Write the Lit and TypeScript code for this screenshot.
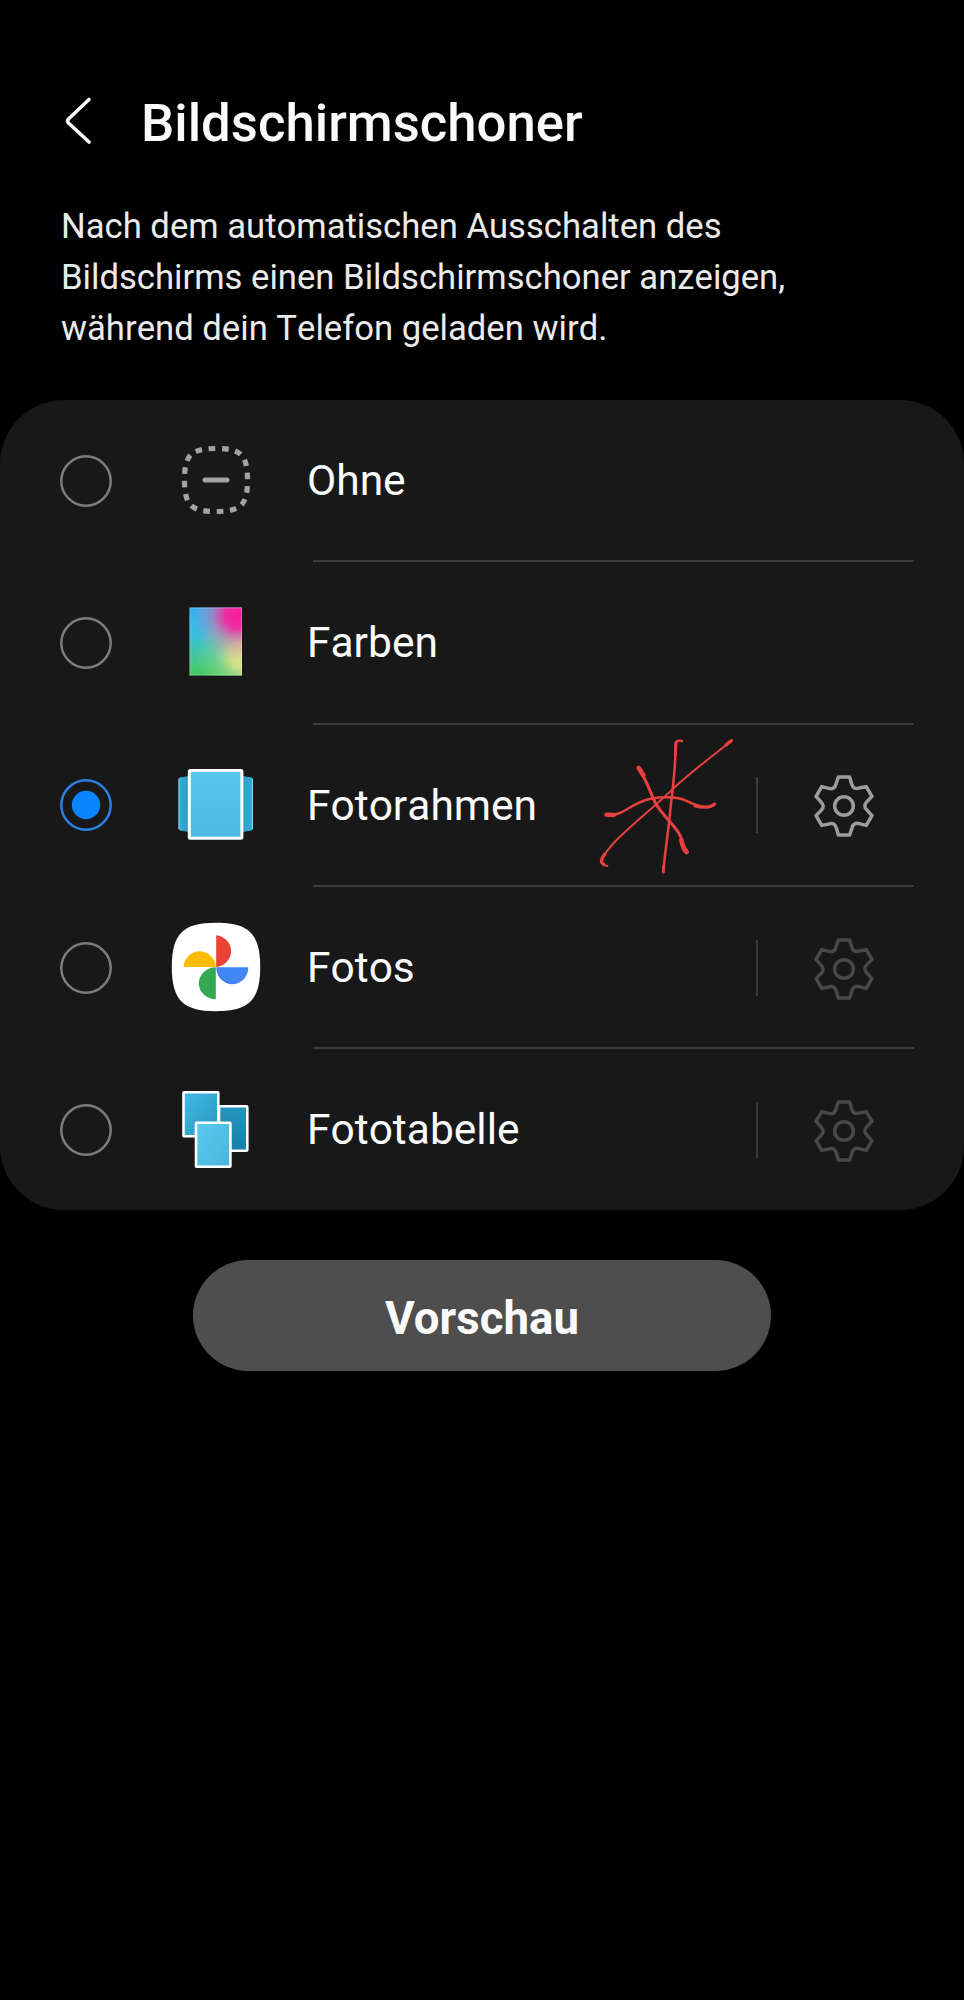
import { LitElement, html, svg, css, nothing } from "lit";
import { customElement, property, state } from "lit/decorators.js";

type Saver = { id: string; label: string; settings?: boolean };

const SAVERS: Saver[] = [
  { id: "none", label: "Ohne" },
  { id: "colors", label: "Farben" },
  { id: "frame", label: "Fotorahmen", settings: true },
  { id: "photos", label: "Fotos", settings: true },
  { id: "table", label: "Fototabelle", settings: true },
];

// One tooth plus the valley after it, repeated six times around the hub.
const TOOTH: number[][] = [[-17, -87], [17, -87], [23, -66], [28, -48.5], [45.1, -53.8]];
const gearPath = (() => {
  let d = "";
  for (let i = 0; i < 6; i++) {
    const a = (i * Math.PI) / 3;
    const p = TOOTH.map(([x, y]) =>
      `${(x * Math.cos(a) - y * Math.sin(a)).toFixed(1)} ${(x * Math.sin(a) + y * Math.cos(a)).toFixed(1)}`);
    d += `${i ? "L" : "M"}${p[0]}L${p[1]}L${p[2]}Q${p[3]} ${p[4]}`;
  }
  return d + "Z";
})();

@customElement("saver-icon")
class SaverIcon extends LitElement {
  @property() name = "none";
  static styles = css`
    :host { display: block; width: 90px; height: 90px; }
    svg { display: block; }
  `;
  private art() {
    switch (this.name) {
      case "none":
        return svg`
          <path d="M45 13.5C70 13.5 76.5 20 76.5 45S70 76.5 45 76.5 13.5 70 13.5 45 20 13.5 45 13.5Z"
            fill="none" stroke="#a3a3a3" stroke-width="5.2" pathLength="160" stroke-dasharray="5 5" stroke-dashoffset="-4.5"/>
          <path d="M34 45H56" stroke="#a3a3a3" stroke-width="5" stroke-linecap="round"/>`;
      case "colors":
        return svg`
          <defs>
            <linearGradient id="base" x1="0" y1="0" x2="0" y2="1">
              <stop offset="0" stop-color="#2fb0f2"/><stop offset=".4" stop-color="#38bfe0"/>
              <stop offset=".85" stop-color="#45c87c"/><stop offset="1" stop-color="#42c862"/>
            </linearGradient>
            <radialGradient id="yellow" gradientUnits="userSpaceOnUse" cx="73" cy="58" r="48">
              <stop offset="0" stop-color="#efdc8c"/><stop offset=".3" stop-color="#e4e288" stop-opacity=".85"/>
              <stop offset=".6" stop-color="#b0dc98" stop-opacity=".4"/>
              <stop offset="1" stop-color="#9adb7c" stop-opacity="0"/>
            </radialGradient>
            <radialGradient id="pink" gradientUnits="userSpaceOnUse" cx="67" cy="18" r="46">
              <stop offset="0" stop-color="#fb1c96"/><stop offset=".3" stop-color="#f22aa0" stop-opacity=".95"/>
              <stop offset=".6" stop-color="#d870b0" stop-opacity=".5"/>
              <stop offset="1" stop-color="#b090c8" stop-opacity="0"/>
            </radialGradient>
          </defs>
          <rect x="18.5" y="10.5" width="52.5" height="68" fill="url(#base)"/>
          <rect x="18.5" y="10.5" width="52.5" height="68" fill="url(#yellow)"/>
          <rect x="18.5" y="10.5" width="52.5" height="68" fill="url(#pink)"/>
          <rect x="19" y="11" width="51.5" height="67" fill="none" stroke="#fff" stroke-opacity=".25"/>`;
      case "frame":
        return svg`
          <defs>
            <linearGradient id="f" x1="0" y1="0" x2="0" y2="1">
              <stop offset="0" stop-color="#58c8ef"/><stop offset="1" stop-color="#4db8e0"/>
            </linearGradient>
            <linearGradient id="s" x1="0" y1="0" x2="1" y2="0">
              <stop offset="0" stop-color="#35b0d8"/><stop offset=".13" stop-color="#2a9cc4"/>
              <stop offset=".87" stop-color="#2ba0c8"/><stop offset="1" stop-color="#35b0d8"/>
            </linearGradient>
          </defs>
          <path d="M7.5 19Q7.5 18 9 17.6L18 16H72L80.5 17.6Q82 18 82 19V69Q82 70 80.5 70.4L72 72H18L9 70.4Q7.5 70 7.5 69Z" fill="url(#s)"/>
          <path d="M8 19V69M81.5 19V69" stroke="#7cd3ee" stroke-width="1"/>
          <rect x="18.3" y="10.5" width="52.6" height="67.8" rx="1" fill="url(#f)" stroke="#fff" stroke-width="3"/>`;
      case "photos":
        return svg`
          <path d="M45 .8C78 .8 89.2 12 89.2 45S78 89.2 45 89.2.8 78 .8 45 12 .8 45 .8Z" fill="#fff"/>
          <path d="M45.2 13.2A16.8 16 0 0 1 45.2 45Z" fill="#ea4335"/>
          <path d="M77.3 45.3A16 17 0 0 1 45.2 45.3Z" fill="#4285f4"/>
          <path d="M44.8 77.3A17 16 0 0 1 44.8 45.3Z" fill="#34a853"/>
          <path d="M12.5 45A16.2 17 0 0 1 44.8 45Z" fill="#fbbc04"/>`;
      default:
        return svg`
          <defs>
            <linearGradient id="a" x1="0" y1="0" x2="1" y2="1">
              <stop offset="0" stop-color="#41bbe8"/><stop offset="1" stop-color="#2795bd"/>
            </linearGradient>
            <linearGradient id="b" x1="0" y1="0" x2="0" y2="1">
              <stop offset="0" stop-color="#2695be"/><stop offset="1" stop-color="#1680a8"/>
            </linearGradient>
            <linearGradient id="c" x1="0" y1="0" x2="1" y2="1">
              <stop offset="0" stop-color="#5acbf0"/><stop offset="1" stop-color="#4ab4db"/>
            </linearGradient>
          </defs>
          <g stroke="#fff" stroke-width="2.6">
            <rect x="12.5" y="8.3" width="34.8" height="44" rx=".5" fill="url(#a)"/>
            <rect x="48" y="22.3" width="28.3" height="44.5" rx="1" fill="url(#b)"/>
            <rect x="25" y="38.7" width="34.4" height="44" rx=".5" fill="url(#c)"/>
          </g>`;
    }
  }
  render() {
    return html`<svg width="90" height="90" viewBox="0 0 90 90">${this.art()}</svg>`;
  }
}

@customElement("app-root")
class AppRoot extends LitElement {
  @state() private selected = "frame";

  static styles = css`
    :host {
      display: block; min-height: 2000px; background: #000; color: #fafafa;
      font-family: Roboto, "Liberation Sans", sans-serif;
    }
    .header { display: flex; align-items: center; padding: 90px 0 0 62px; height: 64px; }
    .back { display: block; margin-right: 43px; }
    .title { margin: 0; padding-top: 1px; font-size: 52.7px; line-height: 64px; font-weight: 500; white-space: nowrap; }
    .intro { margin: 47px 0 0 61px; height: 199px; font-size: 34.65px; line-height: 51px; color: #ebebeb; white-space: nowrap; font-kerning: none; }
    .panel { position: relative; height: 809.5px; border-radius: 64px; background: #181818; display: flex; flex-direction: column; }
    .row { flex: 1; display: grid; grid-template-columns: 52px 90px 1fr auto; align-items: center; padding: 1px 91px 0 59.5px; }
    .radio { display: block; color: #7c7c7c; }
    .radio.on { color: #2c7fe0; }
    .icon { margin: -1px 0 0 59.5px; }
    .label { margin-left: 105.5px; font-size: 42.5px; line-height: 50px; padding-top: 1px; white-space: nowrap; font-kerning: none; }
    .settings { display: flex; align-items: center; gap: 55.5px; }
    .bar { width: 2px; height: 56px; background: #3a3a3a; }
    .gear { color: #9c9c9c; display: block; margin: 2px -0.5px 0 0; }
    .gear.off { color: #484848; }
    .line { height: 2px; margin: 0 50px 0 313px; background: #3a3a3a; }
    .scribble { position: absolute; left: 580px; top: 320px; }
    .preview { display: flex; align-items: center; justify-content: center; width: 578px; height: 111px; margin: 50.5px auto 0; border-radius: 56px; background: #4e4e4e; font-size: 45.6px; font-weight: 700; padding-top: 5px; box-sizing: border-box; }
  `;

  private row(s: Saver, i: number) {
    const on = s.id === this.selected;
    return html`
      ${i ? html`<div class="line"></div>` : nothing}
      <div class="row" @click=${() => (this.selected = s.id)}>
        <svg class="radio ${on ? "on" : ""}" width="52" height="52" viewBox="0 0 52 52">
          <circle cx="26" cy="26" r="24.7" fill="none" stroke="currentColor" stroke-width="2.5" />
          ${on ? svg`<circle cx="26" cy="26" r="14.2" fill="#0a84ff" />` : nothing}
        </svg>
        <saver-icon class="icon" name=${s.id}></saver-icon>
        <div class="label">${s.label}</div>
        ${s.settings ? html`
          <div class="settings">
            <div class="bar"></div>
            <svg class="gear ${on ? "" : "off"}" width="60" height="64" viewBox="-90 -96 180 192"
              fill="none" stroke="currentColor" stroke-width="10.5" stroke-linejoin="round">
              <path d=${gearPath} /><circle r="28" />
            </svg>
          </div>` : nothing}
      </div>`;
  }

  render() {
    return html`
      <div class="header">
        <svg class="back" width="36" height="64" viewBox="0 0 36 64" fill="none" stroke="#fafafa"
          stroke-width="3.6" stroke-linecap="round" stroke-linejoin="round">
          <path d="M27 9.5L6.5 29Q4.7 31 6.5 33L27 52" />
        </svg>
        <h1 class="title">Bildschirmschoner</h1>
      </div>
      <p class="intro">Nach dem automatischen Ausschalten des<br />Bildschirms einen Bildschirmschoner anzeigen,<br />während dein Telefon geladen wird.</p>
      <div class="panel">
        ${SAVERS.map((s, i) => this.row(s, i))}
        <svg class="scribble" width="170" height="170" viewBox="0 0 510 510" fill="none" stroke="#e8403f"
          stroke-width="7.5" stroke-linecap="round" stroke-linejoin="round">
          <path d="M306 63Q287 59 287 72C288 130 278 210 272 260C266 330 254 400 250 456" />
          <path d="M288 68L286 105M251 440L250 456" stroke-width="9" />
          <path d="M454 62C390 115 320 165 270 215C215 268 130 335 96 375C78 397 66 410 64 424Q66 434 82 438" stroke-width="6" />
          <path d="M454 62L438 75M74 403Q62 418 65 427L72 434" stroke-width="10" />
          <path d="M79 284C130 292 150 248 212 236C250 230 290 230 316 241C342 254 385 270 404 252" />
          <path d="M79 284L102 285" stroke-width="13" />
          <path d="M345 258Q385 268 404 252" stroke-width="9" />
          <path d="M176 144C200 180 212 222 228 252C250 290 290 320 302 350C309 372 309 390 321 397" stroke-width="9" />
          <path d="M176 144L190 166M304 360Q309 386 320 396" stroke-width="14" />
        </svg>
      </div>
      <div class="preview">Vorschau</div>
    `;
  }
}
